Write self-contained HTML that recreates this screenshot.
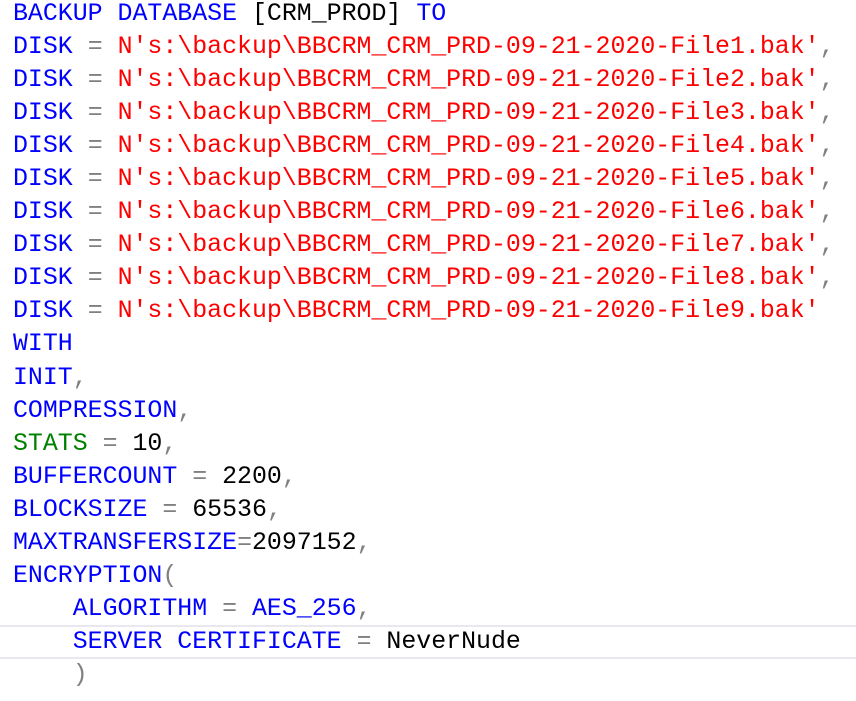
<!DOCTYPE html>
<html><head><style>
html,body{margin:0;padding:0;background:#fff;width:856px;height:701px;overflow:hidden}
.hl{position:absolute;left:0;width:856px;height:30px;top:625px;border-top:2px solid #e8e8ee;border-bottom:2px solid #e8e8ee}
pre{position:absolute;left:13px;top:-2px;margin:0;font-family:"Liberation Mono","DejaVu Sans Mono",monospace;font-size:24.9px;line-height:33.05px;color:#000}
.k{color:#0000ff}.s{color:#ff0000}.o{color:#808080}.g{color:#008000}
</style></head><body>
<div class="hl"></div>
<pre><span class="k">BACKUP DATABASE</span> [CRM_PROD] <span class="k">TO</span>
<span class="k">DISK</span> <span class="o">=</span> <span class="s">N's:\backup\BBCRM_CRM_PRD-09-21-2020-File1.bak'</span><span class="o">,</span>
<span class="k">DISK</span> <span class="o">=</span> <span class="s">N's:\backup\BBCRM_CRM_PRD-09-21-2020-File2.bak'</span><span class="o">,</span>
<span class="k">DISK</span> <span class="o">=</span> <span class="s">N's:\backup\BBCRM_CRM_PRD-09-21-2020-File3.bak'</span><span class="o">,</span>
<span class="k">DISK</span> <span class="o">=</span> <span class="s">N's:\backup\BBCRM_CRM_PRD-09-21-2020-File4.bak'</span><span class="o">,</span>
<span class="k">DISK</span> <span class="o">=</span> <span class="s">N's:\backup\BBCRM_CRM_PRD-09-21-2020-File5.bak'</span><span class="o">,</span>
<span class="k">DISK</span> <span class="o">=</span> <span class="s">N's:\backup\BBCRM_CRM_PRD-09-21-2020-File6.bak'</span><span class="o">,</span>
<span class="k">DISK</span> <span class="o">=</span> <span class="s">N's:\backup\BBCRM_CRM_PRD-09-21-2020-File7.bak'</span><span class="o">,</span>
<span class="k">DISK</span> <span class="o">=</span> <span class="s">N's:\backup\BBCRM_CRM_PRD-09-21-2020-File8.bak'</span><span class="o">,</span>
<span class="k">DISK</span> <span class="o">=</span> <span class="s">N's:\backup\BBCRM_CRM_PRD-09-21-2020-File9.bak'</span>
<span class="k">WITH</span>
<span class="k">INIT</span><span class="o">,</span>
<span class="k">COMPRESSION</span><span class="o">,</span>
<span class="g">STATS</span> <span class="o">=</span> 10<span class="o">,</span>
<span class="k">BUFFERCOUNT</span> <span class="o">=</span> 2200<span class="o">,</span>
<span class="k">BLOCKSIZE</span> <span class="o">=</span> 65536<span class="o">,</span>
<span class="k">MAXTRANSFERSIZE</span><span class="o">=</span>2097152<span class="o">,</span>
<span class="k">ENCRYPTION</span><span class="o">(</span>
    <span class="k">ALGORITHM</span> <span class="o">=</span> <span class="k">AES_256</span><span class="o">,</span>
    <span class="k">SERVER CERTIFICATE</span> <span class="o">=</span> NeverNude
    <span class="o">)</span></pre>
</body></html>
